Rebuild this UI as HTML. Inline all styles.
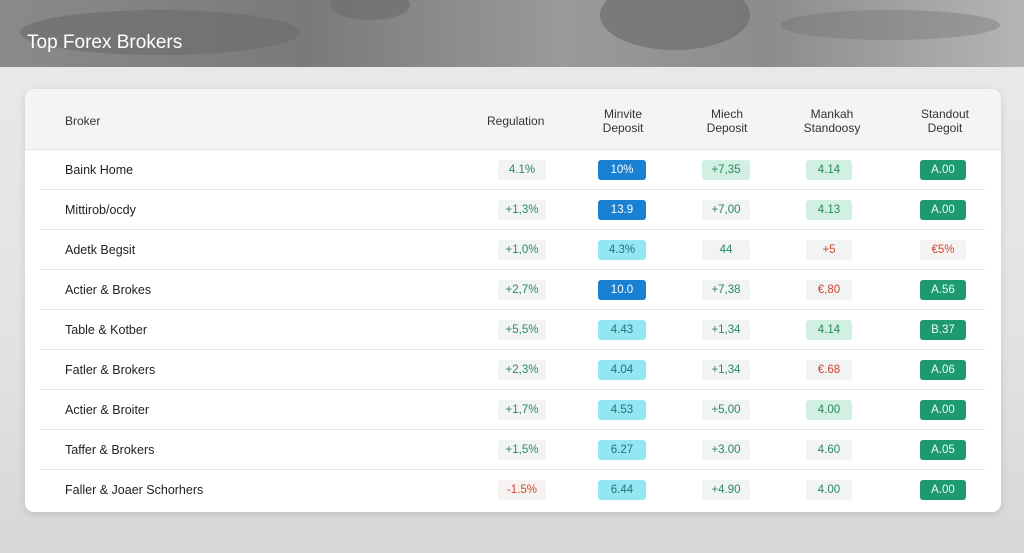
<!DOCTYPE html>
<html><head><meta charset="utf-8"><style>
*{margin:0;padding:0;box-sizing:border-box}
body{width:1024px;height:553px;overflow:hidden;font-family:"Liberation Sans",sans-serif;background:linear-gradient(180deg,#e9eaeb 0%,#e2e3e4 60%,#d6d7d8 100%);position:relative}
.top{position:absolute;left:0;top:0;width:1024px;height:67px;background:linear-gradient(90deg,#8a8a8a 0%,#7a7a7a 30%,#9a9a9a 55%,#8c8c8c 75%,#b5b5b5 100%)}
.top h1{position:absolute;left:27px;top:32px;font-size:19px;font-weight:normal;color:#fff}
.blob{position:absolute;background:#6d6d6d;border-radius:50%;opacity:.7}
.card{position:absolute;left:25px;top:89px;width:976px;height:423px;background:#fff;border-radius:9px;box-shadow:0 2px 8px rgba(0,0,0,.12);overflow:hidden}
.hd{height:61px;background:#f3f4f4;border-bottom:1px solid #e3e5e5;position:relative}
.hd div{position:absolute;font-size:12px;color:#333;text-align:center;line-height:14px}
.row{position:absolute;left:16px;right:16px;height:40px;border-bottom:1px solid #e2e4e4}
.row .n{position:absolute;left:24px;top:13px;font-size:12.5px;color:#222}
.b{position:absolute;top:10px;height:20px;border-radius:3px;font-size:11.5px;line-height:20px;text-align:center;color:#2a8a5e}
.g{background:#f2f3f3}.bl{background:#1a80d2;color:#fff}.cy{background:#92e7f3;color:#2b6e7a}.lg{background:#d1efe2}.dg{background:#1f9a6e;color:#e9fff4}.r{color:#d0462c}.rb{background:#f6f3f2}
</style></head><body>
<div class="top">
<div class="blob" style="left:20px;top:10px;width:280px;height:45px"></div>
<div class="blob" style="left:330px;top:-10px;width:80px;height:30px"></div>
<div class="blob" style="left:600px;top:-20px;width:150px;height:70px"></div>
<div class="blob" style="left:780px;top:10px;width:220px;height:30px;opacity:.35"></div>
<h1>Top Forex Brokers</h1></div>
<div class="card">
<div class="hd">
<div style="left:40px;top:25px">Broker</div>
<div style="left:462px;top:25px">Regulation</div>
<div style="left:570px;top:18px;width:56px">Minvite<br>Deposit</div>
<div style="left:673px;top:18px;width:58px">Miech<br>Deposit</div>
<div style="left:774px;top:18px;width:66px">Mankah<br>Standoosy</div>
<div style="left:888px;top:18px;width:64px">Standout<br>Degoit</div>
</div>
</div>
<div id="rows"></div>
<script>
var d=[
["Baink Home",["4.1%","g"],["10%","bl"],["+7,35","lg"],["4.14","lg"],["A.00","dg"]],
["Mittirob/ocdy",["+1,3%","g"],["13.9","bl"],["+7,00","g"],["4.13","lg"],["A.00","dg"]],
["Adetk Begsit",["+1,0%","g"],["4.3%","cy"],["44","g"],["+5","g r"],["€5%","rb r"]],
["Actier & Brokes",["+2,7%","g"],["10.0","bl"],["+7,38","g"],["€,80","g r"],["A.56","dg"]],
["Table & Kotber",["+5,5%","g"],["4.43","cy"],["+1,34","g"],["4.14","lg"],["B.37","dg"]],
["Fatler & Brokers",["+2,3%","g"],["4.04","cy"],["+1,34","g"],["€.68","g r"],["A.06","dg"]],
["Actier & Broiter",["+1,7%","g"],["4.53","cy"],["+5,00","g"],["4.00","lg"],["A.00","dg"]],
["Taffer & Brokers",["+1,5%","g"],["6.27","cy"],["+3.00","g"],["4.60","g"],["A.05","dg"]],
["Faller & Joaer Schorhers",["-1.5%","rb r"],["6.44","cy"],["+4.90","g"],["4.00","g"],["A.00","dg"]]];
var xs=[[457,48],[557,48],[661,48],[765,46],[879,46]];
var card=document.querySelector('.card'),h='';
d.forEach(function(r,i){h+='<div class="row" style="top:'+(61+i*40)+'px'+(i==8?';border:none':'')+'"><div class="n">'+r[0]+'</div>';
for(var k=0;k<5;k++)h+='<div class="b '+r[k+1][1]+'" style="left:'+xs[k][0]+'px;width:'+xs[k][1]+'px">'+r[k+1][0]+'</div>';h+='</div>';});
card.insertAdjacentHTML('beforeend',h);
</script>
</body></html>
